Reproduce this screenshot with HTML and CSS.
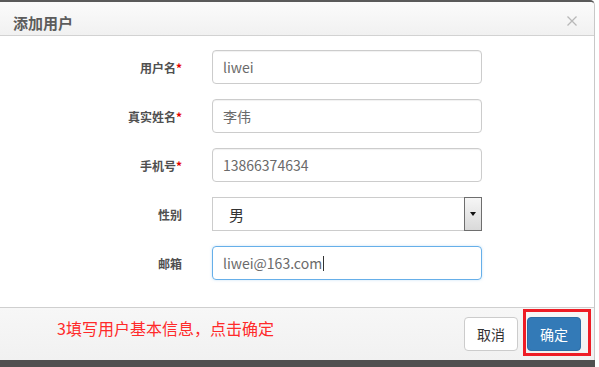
FILE: index.html
```html
<!DOCTYPE html>
<html lang="zh-CN">
<head>
<meta charset="utf-8">
<title>添加用户</title>
<link rel="stylesheet" href="styles.css">
</head>
<body>
<div class="modal">
  <div class="modal-header">
    <div class="modal-title">添加用户</div>
    <svg class="close" width="10" height="10" viewBox="0 0 10 10"><path d="M0.5 0.5 L9.5 9.5 M9.5 0.5 L0.5 9.5" stroke="#b8b8b8" stroke-width="1.3" fill="none"/></svg>
  </div>
  <div class="modal-body">
    <div class="row">
      <div class="label">用户名<span class="req">*</span></div>
      <div class="field">liwei</div>
    </div>
    <div class="row">
      <div class="label">真实姓名<span class="req">*</span></div>
      <div class="field">李伟</div>
    </div>
    <div class="row">
      <div class="label">手机号<span class="req">*</span></div>
      <div class="field">13866374634</div>
    </div>
    <div class="row">
      <div class="label">性别</div>
      <div class="select"><span class="select-value">男</span><span class="select-btn"><span class="tri"></span></span></div>
    </div>
    <div class="row">
      <div class="label">邮箱</div>
      <div class="field focus">liwei@163.com<span class="caret"></span></div>
    </div>
  </div>
  <div class="modal-footer">
    <div class="note">3填写用户基本信息，点击确定</div>
    <div class="btn btn-default">取消</div>
    <div class="btn btn-primary">确定</div>
    <div class="highlight"></div>
  </div>
</div>
<div class="backdrop-band"></div>
</body>
</html>
```
FILE: styles.css
```css
html, body {
  margin: 0;
  padding: 0;
  background: #ffffff;
}
body {
  font-family: "Noto Sans CJK SC", "Noto Sans", sans-serif;
  width: 599px;
  height: 367px;
  overflow: hidden;
}
.modal {
  width: 595px;
  height: 360px;
  box-sizing: border-box;
  border-top: 2px solid #5a5a5a;
  border-right: 1px solid #c8c8c8;
  border-top-right-radius: 5px;
  display: flex;
  flex-direction: column;
  background: #fff;
  position: relative;
}
.modal-header {
  height: 34px;
  box-sizing: border-box;
  border-bottom: 1px solid #d2d2d2;
  background: linear-gradient(#fbfbfb, #f1f1f1);
  display: flex;
  justify-content: space-between;
  align-items: flex-start;
  padding: 11px 17px 0 13px;
  border-top-right-radius: 4px;
}
.modal-title {
  font-size: 15px;
  font-weight: 700;
  line-height: 20px;
  color: #5c5c5c;
}
.close {
  margin-top: 3px;
}
.modal-body {
  flex: 1;
  padding-top: 14px;
  display: flex;
  flex-direction: column;
  gap: 15px;
}
.row {
  display: flex;
  align-items: center;
  height: 34px;
}
.label {
  width: 182px;
  text-align: right;
  font-size: 12px;
  font-weight: 700;
  color: #505050;
  margin-right: 30px;
}
.req {
  color: #e60000;
}
.field, .select {
  width: 270px;
  height: 34px;
  box-sizing: border-box;
  border: 1px solid #cccccc;
  border-radius: 4px;
  padding: 0 10px;
  font-size: 14px;
  color: #6a6a6a;
  display: flex;
  align-items: center;
  box-shadow: inset 0 1px 1px rgba(0,0,0,.06);
}
.field.focus {
  border-color: #66afe9;
  box-shadow: 0 0 3px rgba(102,175,233,.35);
}
.caret {
  width: 1px;
  height: 15px;
  background: #333;
  margin-left: 1px;
}
.select {
  border-radius: 0;
  padding: 0 0 0 16px;
  color: #333;
  box-shadow: none;
  justify-content: space-between;
}
.select-value {
  font-size: 15px;
}
.select-btn {
  width: 18px;
  height: 34px;
  box-sizing: border-box;
  margin-right: -1px;
  border: 1px solid #6e6e6e;
  background: linear-gradient(#f6f6f6, #d9d9d9);
  display: flex;
  align-items: center;
  justify-content: center;
}
.tri {
  width: 0;
  height: 0;
  border-left: 3.5px solid transparent;
  border-right: 3.5px solid transparent;
  border-top: 4px solid #111;
}
.modal-footer {
  height: 53px;
  box-sizing: border-box;
  border-top: 1px solid #cfcfcf;
  background: linear-gradient(#f7f7f7, #f1f1f1);
  display: flex;
  align-items: flex-start;
  padding: 9px 13px 0 57px;
  gap: 9px;
  position: relative;
}
.note {
  flex: 1;
  font-size: 16px;
  line-height: 22px;
  color: #ff2a2a;
}
.btn {
  width: 54px;
  height: 34px;
  box-sizing: border-box;
  border-radius: 4px;
  font-size: 14px;
  display: flex;
  align-items: center;
  justify-content: center;
}
.btn-default {
  background: #fff;
  border: 1px solid #cccccc;
  color: #333;
}
.btn-primary {
  background: #337ab7;
  border: 1px solid #2e6da4;
  color: #fff;
}
.highlight {
  position: absolute;
  left: 523px;
  top: 1px;
  width: 68px;
  height: 47px;
  box-sizing: border-box;
  border: 3px solid #ee1c25;
}
.backdrop-band {
  width: 595px;
  height: 7px;
  background: #505050;
}
```
